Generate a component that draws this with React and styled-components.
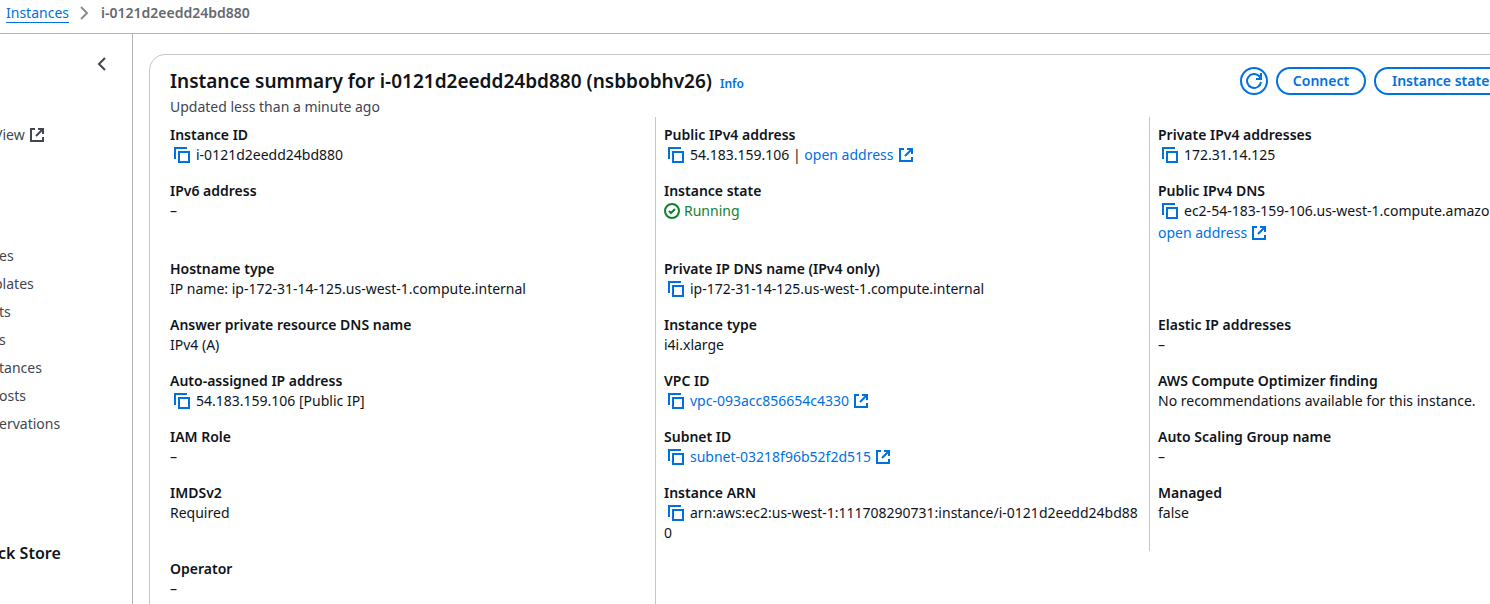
import React from "react";
import styled, { createGlobalStyle } from "styled-components";

const BLUE = "#0071e0";
const INK = "#0f141a";
const MUTED = "#424650";

const Global = createGlobalStyle`
  *, *::before, *::after { box-sizing: border-box; }
  body { margin: 0; background: #fff; color: ${INK}; font: 400 14px/20px "Noto Sans", "Open Sans", sans-serif; }
`;

const Viewport = styled.div`
  min-height: 100vh;
  max-height: 100vh;
  overflow: hidden;
  display: flex;
  flex-direction: column;
`;

const Breadcrumbs = styled.nav`
  flex: none;
  display: flex;
  align-items: center;
  gap: 8px;
  height: 34px;
  padding: 0 6px 8px;
  border-bottom: 1px solid #b4b4bb;
`;

const Crumb = styled.a`
  color: ${BLUE};
  text-decoration: underline;
  text-underline-offset: 4px;
`;

const CurrentCrumb = styled.span`
  color: #656871;
  font-weight: 600;
`;

const Body = styled.div`
  flex: 1;
  display: flex;
  align-items: stretch;
`;

const Sidebar = styled.aside`
  flex: none;
  width: 133px;
  border-right: 1px solid #b4b4bb;
  color: ${MUTED};
`;

const Collapse = styled.button`
  display: flex;
  margin: 22px 22px 0 auto;
  padding: 0;
  border: 0;
  background: none;
  color: ${MUTED};
  cursor: pointer;
`;

const NavList = styled.ul`
  list-style: none;
  margin: 0;
  padding: ${(p) => (p.$spaced ? "101px" : "53px")} 0 0;
  display: grid;
  gap: 8px;
`;

const NavLink = styled.a`
  display: flex;
  align-items: center;
  gap: 4px;
  margin-left: ${(p) => (p.$cut ? "-6px" : "-1px")};
  color: inherit;
  text-decoration: none;
`;

const NavHeading = styled.h2`
  margin: 109px 0 0 -2px;
  color: ${INK};
  font-size: 16px;
  font-weight: 600;
  line-height: 20px;
`;

const Main = styled.main`
  flex: 1;
  min-width: 0;
  margin-right: -165px;
  padding: 20px 0 0 16px;
`;

const Card = styled.section`
  min-height: 100%;
  padding: 12px 11px;
  border: 1px solid #c6c6cd;
  border-radius: 16px;
`;

const CardHeader = styled.header`
  display: flex;
  align-items: center;
  justify-content: space-between;
  height: 28px;
  padding: 0 117px 0 9px;
`;

const TitleGroup = styled.div`
  display: flex;
  align-items: baseline;
  gap: 8px;
`;

const Title = styled.h1`
  margin: 0;
  font-size: 19px;
  font-weight: 600;
  line-height: 24px;
`;

const InfoLink = styled.a`
  color: ${BLUE};
  font-size: 12px;
  font-weight: 600;
  text-decoration: none;
`;

const Actions = styled.div`
  display: flex;
  gap: 8px;
`;

const Button = styled.button`
  display: flex;
  align-items: center;
  justify-content: ${(p) => (p.$menu ? "space-between" : "center")};
  width: ${(p) => p.$width};
  height: 28px;
  padding: 0 ${(p) => (p.$menu ? "16px" : "0")};
  border: 2px solid ${BLUE};
  border-radius: 14px;
  background: #fff;
  color: ${BLUE};
  font: inherit;
  font-weight: 600;
  cursor: pointer;
`;

const Updated = styled.p`
  margin: 2px 9px 0;
  color: ${MUTED};
`;

const Details = styled.dl`
  display: grid;
  grid-template-columns: repeat(3, 1fr);
  margin: 0;
`;

const Cell = styled.div`
  min-width: 0;
  padding: 8px;
  border-left: 1px solid ${(p) => (p.$divided ? "#c6c6cd" : "transparent")};
`;

const Label = styled.dt`
  font-weight: 600;
`;

const Value = styled.dd`
  margin: 0;
  word-break: ${(p) => (p.$breakAll ? "break-all" : "normal")};
`;

const SecondLine = styled.div`
  margin-top: 2px;
`;

const CopyButton = styled.button`
  margin: 0 6px 0 4px;
  padding: 0;
  border: 0;
  background: none;
  color: ${BLUE};
  line-height: 0;
  vertical-align: -3px;
  cursor: pointer;
`;

const TextLink = styled.a`
  color: ${BLUE};
  text-decoration: none;
`;

const Status = styled.span`
  display: flex;
  align-items: center;
  gap: 4px;
  color: #12802f;
`;

const Icon = styled.svg.attrs({ width: 16, height: 16, viewBox: "0 0 16 16", "aria-hidden": true })`
  flex: none;
  fill: none;
  stroke: currentColor;
  stroke-width: 2;
`;

const CrumbIcon = styled(Icon)`
  color: #8c8c94;
`;

const InlineIcon = styled(Icon)`
  margin-left: 4px;
  vertical-align: -3px;
`;

const externalPaths = (
  <>
    <path d="M6 2H2v12h12v-4" />
    <path d="M9 2h5v5M14 2 7 9" />
  </>
);

const Copy = () => (
  <CopyButton aria-label="Copy">
    <Icon>
      <path d="M1 12V1h12" />
      <path d="M5 5h10v10H5z" />
    </Icon>
  </CopyButton>
);

const External = ({ children }) => (
  <TextLink href="#">
    {children}
    <InlineIcon>{externalPaths}</InlineIcon>
  </TextLink>
);

const rows = [
  [
    ["Instance ID", <><Copy />i-0121d2eedd24bd880</>],
    ["Public IPv4 address", <><Copy />54.183.159.106 | <External>open address</External></>],
    ["Private IPv4 addresses", <><Copy />172.31.14.125</>],
  ],
  [
    ["IPv6 address", "–"],
    ["Instance state", <Status><Icon><circle cx="8" cy="8" r="7" /><path d="m5 8 2 2 4-4" /></Icon>Running</Status>],
    ["Public IPv4 DNS", <><Copy />ec2-54-183-159-106.us-west-1.compute.amazo<SecondLine><External>open address</External></SecondLine></>],
  ],
  [
    ["Hostname type", "IP name: ip-172-31-14-125.us-west-1.compute.internal"],
    ["Private IP DNS name (IPv4 only)", <><Copy />ip-172-31-14-125.us-west-1.compute.internal</>],
    [],
  ],
  [
    ["Answer private resource DNS name", "IPv4 (A)"],
    ["Instance type", "i4i.xlarge"],
    ["Elastic IP addresses", "–"],
  ],
  [
    ["Auto-assigned IP address", <><Copy />54.183.159.106 [Public IP]</>],
    ["VPC ID", <><Copy /><External>vpc-093acc856654c4330</External></>],
    ["AWS Compute Optimizer finding", "No recommendations available for this instance."],
  ],
  [
    ["IAM Role", "–"],
    ["Subnet ID", <><Copy /><External>subnet-03218f96b52f2d515</External></>],
    ["Auto Scaling Group name", "–"],
  ],
  [
    ["IMDSv2", "Required"],
    ["Instance ARN", <><Copy />arn:aws:ec2:us-west-1:111708290731:instance/i-0121d2eedd24bd880</>, true],
    ["Managed", "false"],
  ],
  [["Operator", "–"], []],
];

const navItems = [["es"], ["plates", true], ["ts"], ["s"], ["tances"], ["osts"], ["ervations"]];

export default function App() {
  return (
    <Viewport>
      <Global />
      <Breadcrumbs aria-label="Breadcrumbs">
        <Crumb href="#">Instances</Crumb>
        <CrumbIcon><path d="m4 2 6 6-6 6" /></CrumbIcon>
        <CurrentCrumb>i-0121d2eedd24bd880</CurrentCrumb>
      </Breadcrumbs>
      <Body>
        <Sidebar>
          <Collapse aria-label="Close navigation">
            <Icon><path d="m11 2-6 6 6 6" /></Icon>
          </Collapse>
          <NavList>
            <li><NavLink href="#" $cut>View<Icon>{externalPaths}</Icon></NavLink></li>
          </NavList>
          <NavList $spaced>
            {navItems.map(([text, cut]) => (
              <li key={text}><NavLink href="#" $cut={cut}>{text}</NavLink></li>
            ))}
          </NavList>
          <NavHeading>ck Store</NavHeading>
        </Sidebar>
        <Main>
          <Card>
            <CardHeader>
              <TitleGroup>
                <Title>Instance summary for i-0121d2eedd24bd880 (nsbbobhv26)</Title>
                <InfoLink href="#">Info</InfoLink>
              </TitleGroup>
              <Actions>
                <Button $width="28px" aria-label="Refresh">
                  <Icon><path d="M15 9a7 7 0 1 1-2-6l2 3M15 0v6h-5" /></Icon>
                </Button>
                <Button $width="90px">Connect</Button>
                <Button $width="152px" $menu>Instance state</Button>
              </Actions>
            </CardHeader>
            <Updated>Updated less than a minute ago</Updated>
            <Details>
              {rows.map((row, r) =>
                row.map(([label, value, breakAll], c) => (
                  <Cell key={`${r}-${c}`} $divided={c > 0}>
                    {label && <Label>{label}</Label>}
                    {label && <Value $breakAll={breakAll}>{value}</Value>}
                  </Cell>
                ))
              )}
            </Details>
          </Card>
        </Main>
      </Body>
    </Viewport>
  );
}
